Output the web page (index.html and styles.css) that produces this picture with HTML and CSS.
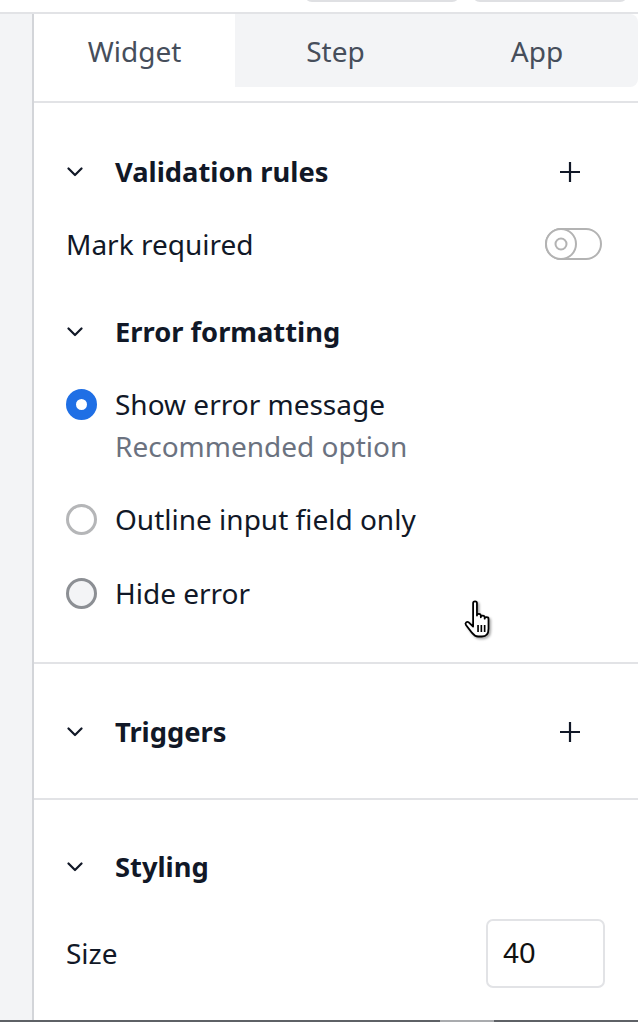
FILE: index.html
```html
<!DOCTYPE html>
<html>
<head>
<meta charset="utf-8">
<link rel="stylesheet" href="styles.css">
</head>
<body>
<div class="topbar">
  <div class="top-btn"></div>
  <div class="top-btn"></div>
</div>
<div class="main">
  <div class="gutter"></div>
  <div class="panel">
    <div class="tabs-wrap">
      <div class="tabs">
        <div class="tab active">Widget</div>
        <div class="tab">Step</div>
        <div class="tab">App</div>
      </div>
    </div>

    <section class="section s1">
      <div class="header">
        <svg class="chev" width="16" height="10" viewBox="0 0 16 10"><path d="M1.5 1.5 L8 8 L14.5 1.5" fill="none" stroke="#111827" stroke-width="2.2" stroke-linecap="round" stroke-linejoin="round"/></svg>
        <span class="title">Validation rules</span>
        <svg class="plus" width="22" height="22" viewBox="0 0 22 22"><path d="M11 1 V21 M1 11 H21" stroke="#111827" stroke-width="2.2"/></svg>
      </div>
      <div class="row mark">
        <span class="label">Mark required</span>
        <svg class="toggle" width="57" height="32" viewBox="0 0 57 32"><rect x="1" y="1" width="55" height="30" rx="15" fill="#fff" stroke="#b3b3b3" stroke-width="2"/><circle cx="16" cy="16" r="15" fill="#fff" stroke="#b3b3b3" stroke-width="2"/><circle cx="16" cy="16" r="5.5" fill="none" stroke="#b3b3b3" stroke-width="2"/></svg>
      </div>
      <div class="header sub">
        <svg class="chev" width="16" height="10" viewBox="0 0 16 10"><path d="M1.5 1.5 L8 8 L14.5 1.5" fill="none" stroke="#111827" stroke-width="2.2" stroke-linecap="round" stroke-linejoin="round"/></svg>
        <span class="title">Error formatting</span>
      </div>
      <div class="option first">
        <span class="radio checked"></span>
        <div class="opt-text">
          <div class="label">Show error message</div>
          <div class="helper">Recommended option</div>
        </div>
      </div>
      <div class="option second">
        <span class="radio"></span>
        <div class="opt-text"><div class="label">Outline input field only</div></div>
      </div>
      <div class="option third">
        <span class="radio hover"></span>
        <div class="opt-text"><div class="label">Hide error</div></div>
      </div>
    </section>

    <section class="section s2">
      <div class="header">
        <svg class="chev" width="16" height="10" viewBox="0 0 16 10"><path d="M1.5 1.5 L8 8 L14.5 1.5" fill="none" stroke="#111827" stroke-width="2.2" stroke-linecap="round" stroke-linejoin="round"/></svg>
        <span class="title">Triggers</span>
        <svg class="plus" width="22" height="22" viewBox="0 0 22 22"><path d="M11 1 V21 M1 11 H21" stroke="#111827" stroke-width="2.2"/></svg>
      </div>
    </section>

    <section class="section s3">
      <div class="header">
        <svg class="chev" width="16" height="10" viewBox="0 0 16 10"><path d="M1.5 1.5 L8 8 L14.5 1.5" fill="none" stroke="#111827" stroke-width="2.2" stroke-linecap="round" stroke-linejoin="round"/></svg>
        <span class="title">Styling</span>
      </div>
      <div class="row size">
        <span class="label">Size</span>
        <div class="input">40</div>
      </div>
    </section>
  </div>
</div>

<svg class="cursor" width="40" height="44" viewBox="0 0 36 40">
  <defs><filter id="sh" x="-30%" y="-30%" width="160%" height="160%"><feDropShadow dx="1.5" dy="1.5" stdDeviation="1" flood-color="#000" flood-opacity="0.35"/></filter></defs>
  <path filter="url(#sh)" d="M9 4.5 C9 2.5 12.5 2.5 12.5 4.5 L12.5 16 C12.5 14 16 14 16 16 L16 17.5 C16 15.5 19.5 15.5 19.5 17.5 L19.5 18.8 C19.5 17 23 17 23 18.8 L23 28 C23 32 21 35 17 35 L13.5 35 C10.5 35 9.5 33.5 7.5 31 L2.5 24.5 C1.2 22.8 3.5 20.8 5 22.2 L9 26 Z" fill="#fff" stroke="#000" stroke-width="1.6" stroke-linejoin="round"/>
  <path d="M13.5 24.5 V31 M16.5 24.5 V31 M19.5 24.5 V31" stroke="#000" stroke-width="1.5"/>
</svg>
<div class="bottom-edge"><div class="thumb"></div></div>
</body>
</html>
```

FILE: styles.css
```css
* { box-sizing: border-box; }
html, body { margin: 0; padding: 0; }
body {
  background: #fff;
  font-family: "Noto Sans", "Open Sans", sans-serif;
  color: #111827;
  width: 638px;
  height: 1022px;
  overflow: hidden;
  position: relative;
}
.topbar {
  height: 14px;
  display: flex;
  justify-content: flex-end;
  align-items: flex-end;
  gap: 12px;
  padding: 0 10px 10px 0;
  border-bottom: 2px solid #e2e3e6;
  overflow: hidden;
}
.top-btn {
  width: 156px;
  height: 40px;
  flex: none;
  border: 2px solid #dfe0e3;
  border-radius: 8px;
  background: #fff;
}
.main {
  display: flex;
  height: 1008px;
}
.gutter {
  width: 34px;
  flex: none;
  background: #f3f4f6;
  border-right: 2px solid #d3d5d9;
}
.panel {
  flex: 1;
  display: flex;
  flex-direction: column;
}
.tabs-wrap {
  padding-bottom: 14px;
  border-bottom: 2px solid #e2e3e6;
}
.tabs {
  display: grid;
  grid-template-columns: 201px 201px 1fr;
  height: 73px;
  background: #f3f4f6;
  border-top-right-radius: 8px;
  border-bottom-right-radius: 8px;
}
.tab {
  display: flex;
  align-items: center;
  justify-content: center;
  font-size: 28px;
  color: #464e5b;
}
.tab.active { background: #fff; }
.section {
  padding: 0 34px 0 32px;
  border-bottom: 2px solid #e2e3e6;
}
.header {
  height: 40px;
  display: flex;
  align-items: center;
}
.chev { flex: none; margin-left: 1px; }
.title {
  margin-left: 32px;
  font-size: 27.3px;
  font-weight: 700;
  color: #111827;
  flex: 1;
  line-height: 38px;
}
.plus { flex: none; margin-right: 23px; }
.row {
  display: flex;
  align-items: center;
  justify-content: space-between;
}
.label {
  font-size: 28px;
  color: #111827;
}
.s1 { padding-top: 49px; padding-bottom: 49px; }
.mark { height: 40px; margin-top: 32px; }
.toggle { flex: none; margin-right: 2px; }
.header.sub { margin-top: 48px; }
.option {
  display: flex;
  align-items: flex-start;
}
.option.first { margin-top: 32px; }
.option.second { margin-top: 35px; }
.option.third { margin-top: 34px; }
.radio {
  width: 31px;
  height: 31px;
  flex: none;
  border-radius: 50%;
  margin-top: 4.5px;
  border: 3px solid #b5b6b8;
  background: #fff;
}
.radio.checked {
  border: 10.5px solid #1f6fe5;
  background: #fff;
}
.radio.hover {
  border-color: #8c8f94;
  background: #f3f4f6;
}
.opt-text { margin-left: 18px; }
.opt-text .label { line-height: 40px; }
.helper {
  font-size: 28px;
  color: #6b7280;
  line-height: 36px;
  margin-top: 4px;
}
.s2 { padding-top: 48px; padding-bottom: 46px; }
.s3 { padding-top: 47px; border-bottom: none; flex: 1; }
.size { margin-top: 32px; height: 68px; }
.input {
  width: 119px;
  height: 69px;
  border: 2px solid #e2e3e6;
  border-radius: 7px;
  font-family: "Liberation Sans", Arial, sans-serif;
  font-size: 29px;
  color: #111;
  display: flex;
  align-items: center;
  padding-left: 15px;
  margin-right: -1px;
}
.cursor {
  position: absolute;
  left: 463px;
  top: 598px;
}
.bottom-edge {
  position: absolute;
  left: 0;
  right: 0;
  bottom: 0;
  height: 2px;
  background: #5e6166;
}
.thumb {
  position: absolute;
  left: 440px;
  width: 54px;
  top: 0;
  height: 2px;
  background: #a9abae;
}
```
